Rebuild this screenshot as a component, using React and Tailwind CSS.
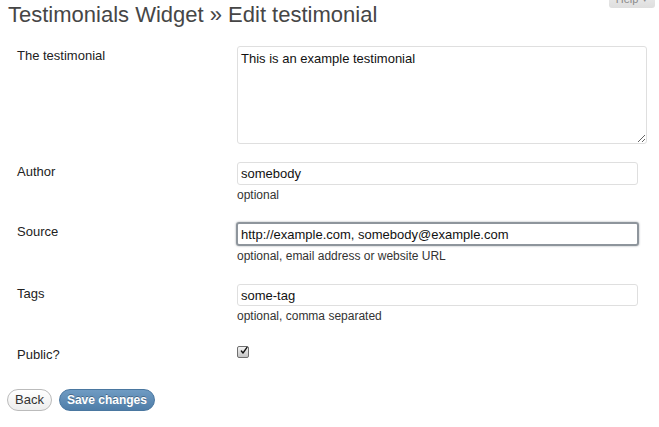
import { useState } from 'react';

const font = { fontFamily: '"Liberation Sans", Arial, sans-serif' };

function Row({ label, children }) {
  return (
    <div className="flex">
      <div className="w-[229px] shrink-0 pl-[9px] pt-[1px] text-[13px] leading-[17px] text-[#222]">{label}</div>
      <div className="flex-1">{children}</div>
    </div>
  );
}

function Hint({ children }) {
  return <p className="mt-[2px] text-[12px] leading-[17px] text-[#333]">{children}</p>;
}

export default function App() {
  const [testimonial, setTestimonial] = useState('This is an example testimonial');
  const [author, setAuthor] = useState('somebody');
  const [source, setSource] = useState('http://example.com, somebody@example.com');
  const [tags, setTags] = useState('some-tag');
  const [isPublic, setIsPublic] = useState(true);

  return (
    <div className="relative min-h-screen bg-white px-[8px]" style={font}>
      {/* Help tab, partly above the top edge */}
      <div className="absolute right-[4px] top-[-7px] flex h-[15px] w-[46px] items-start justify-center rounded-b-[3px] bg-gradient-to-b from-[#ececec] to-[#dedede] text-[11px] leading-[13px] text-[#8a8a8a]">
        Help <span className="ml-[3px] text-[7px]">▼</span>
      </div>

      {/* Header */}
      <h2 className="text-[22px] leading-[29px] text-[#464646]">Testimonials Widget » Edit testimonial</h2>

      {/* Form */}
      <div className="mt-[17px] flex flex-col">
        <Row label="The testimonial">
          <textarea
            value={testimonial}
            onChange={(e) => setTestimonial(e.target.value)}
            className="block h-[98px] w-[410px] rounded-[3px] border border-[#dfdfdf] px-[3px] py-[3px] text-[13px] leading-[17px] text-[#111] outline-none"
          />
        </Row>

        <div className="mt-[18px]">
          <Row label="Author">
            <input
              value={author}
              onChange={(e) => setAuthor(e.target.value)}
              className="block h-[23px] w-[401px] rounded-[3px] border border-[#dfdfdf] px-[3px] text-[13px] text-[#111] outline-none"
            />
            <Hint>optional</Hint>
          </Row>
        </div>

        <div className="mt-[18px]">
          <Row label="Source">
            <input
              value={source}
              onChange={(e) => setSource(e.target.value)}
              className="-ml-[1px] block h-[24px] w-[403px] rounded-[3px] border-2 border-[#8e959c] px-[3px] text-[13px] text-[#111] shadow-[0_0_2px_rgba(80,90,100,0.6)] outline-none"
            />
            <Hint>optional, email address or website URL</Hint>
          </Row>
        </div>

        <div className="mt-[19px]">
          <Row label="Tags">
            <input
              value={tags}
              onChange={(e) => setTags(e.target.value)}
              className="block h-[22px] w-[401px] rounded-[3px] border border-[#dfdfdf] px-[3px] text-[13px] text-[#111] outline-none"
            />
            <Hint>optional, comma separated</Hint>
          </Row>
        </div>

        <div className="mt-[20px]">
          <Row label="Public?">
            <button
              type="button"
              onClick={() => setIsPublic(!isPublic)}
              className="mt-[1px] flex h-[12px] w-[12px] items-center justify-center rounded-[2px] border border-[#6f6f6f] bg-gradient-to-b from-[#f4f4f4] to-[#c4c4c4]"
            >
              {isPublic && (
                <svg width="12" height="12" viewBox="0 0 12 12" className="-mt-[3px] ml-[2px]">
                  <path d="M2 6 L4.5 9 L10.5 0.5" fill="none" stroke="#111" strokeWidth="2" strokeLinecap="round" strokeLinejoin="round" />
                </svg>
              )}
            </button>
          </Row>
        </div>

        {/* Actions */}
        <div className="mt-[26px] flex items-center gap-[7px]">
          <button className="-ml-[1px] h-[22px] rounded-full border border-[#bbb] bg-gradient-to-b from-white to-[#ededed] px-[7px] text-[13px] leading-[20px] text-[#333]">
            Back
          </button>
          <button className="h-[22px] rounded-full border border-[#4a77a0] bg-gradient-to-b from-[#6f9bc3] to-[#4f7da8] px-[7px] text-[12px] font-bold leading-[20px] text-white [text-shadow:0_-1px_0_rgba(0,0,0,0.3)]">
            Save changes
          </button>
        </div>
      </div>
    </div>
  );
}
